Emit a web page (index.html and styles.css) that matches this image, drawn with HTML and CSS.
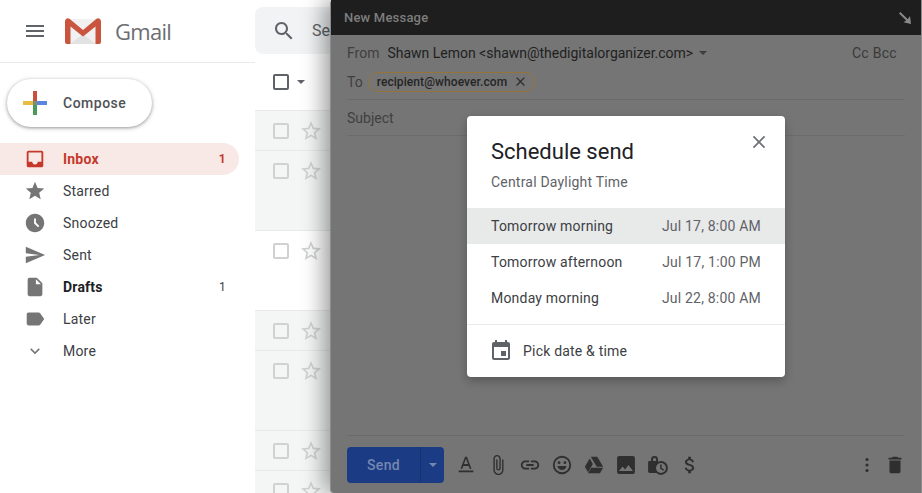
FILE: index.html
```html
<!DOCTYPE html>
<html lang="en">
<head>
<meta charset="utf-8">
<title>Gmail - Schedule send</title>
<link rel="stylesheet" href="styles.css">
</head>
<body>
<svg class="sprite" xmlns="http://www.w3.org/2000/svg">
  <symbol id="star-o" viewBox="0 0 24 24"><path d="M22 9.24l-7.19-.62L12 2 9.19 8.63 2 9.24l5.46 4.73L5.82 21 12 17.27 18.18 21l-1.63-7.03L22 9.24zM12 15.4l-3.76 2.27 1-4.28-3.32-2.88 4.38-.38L12 6.1l1.71 4.04 4.38.38-3.32 2.88 1 4.28L12 15.4z"/></symbol>
  <symbol id="check" viewBox="0 0 24 24"><path fill-rule="evenodd" d="M6 4h12a2 2 0 0 1 2 2v12a2 2 0 0 1-2 2H6a2 2 0 0 1-2-2V6a2 2 0 0 1 2-2zm0 2v12h12V6z"/></symbol>
</svg>
<div class="app">
  <aside class="sidebar">
    <header class="brand">
      <svg class="icon menu" viewBox="0 0 24 24"><path d="M3 18h18v-2H3v2zm0-5h18v-2H3v2zm0-7v2h18V6H3z"/></svg>
      <svg class="logo" viewBox="0 0 36 26">
        <path fill="#f1f1f1" d="M3 1h30v23a2 2 0 0 1-2 2H5a2 2 0 0 1-2-2z"/>
        <path fill="#e2e2e2" d="M5 26L18 16l13 10z"/>
        <path fill="#c9553f" d="M0 3.500C0 .8 2.500-.6 4.500.8L18 12 31.500.8C33.500-.6 36 .8 36 3.500V24a2 2 0 0 1-2 2h-3.500V8.500L18 18.500 5.500 8.500V26H2a2 2 0 0 1-2-2z"/>
      </svg>
      <span class="wordmark">Gmail</span>
    </header>
    <button class="compose" type="button">
      <svg class="plus" viewBox="0 0 24 24">
        <rect x="10" y="0" width="4" height="10" fill="#c9503f"/>
        <rect x="14" y="10" width="10" height="4" fill="#5b86e0"/>
        <rect x="10" y="14" width="4" height="10" fill="#4b9a5a"/>
        <rect x="0" y="10" width="10" height="4" fill="#e9bd42"/>
        <rect x="10" y="10" width="4" height="4" fill="#7f8f6f"/>
      </svg>
      <span>Compose</span>
    </button>
    <nav class="nav">
      <a class="nav-item active"><svg class="icon" viewBox="0 0 24 24"><path fill-rule="evenodd" d="M5 3h14a2 2 0 0 1 2 2v14a2 2 0 0 1-2 2H5a2 2 0 0 1-2-2V5a2 2 0 0 1 2-2zm0 2v10h4c0 1.660 1.350 3 3 3s3-1.340 3-3h4V5z"/></svg><span class="label">Inbox</span><span class="count">1</span></a>
      <a class="nav-item"><svg class="icon" viewBox="0 0 24 24"><path d="M12 17.270L18.180 21l-1.640-7.030L22 9.240l-7.190-.61L12 2 9.190 8.630 2 9.240l5.460 4.730L5.820 21z"/></svg><span class="label">Starred</span></a>
      <a class="nav-item"><svg class="icon" viewBox="0 0 24 24"><path d="M11.990 2C6.470 2 2 6.480 2 12s4.470 10 9.990 10C17.520 22 22 17.520 22 12S17.520 2 11.990 2zm3.300 14.710L11 12.410V7h2v4.590l3.710 3.710-1.420 1.410z"/></svg><span class="label">Snoozed</span></a>
      <a class="nav-item"><svg class="icon" viewBox="0 0 24 24"><path d="M2.010 21L23 12 2.010 3 2 10l15 2-15 2z"/></svg><span class="label">Sent</span></a>
      <a class="nav-item strong"><svg class="icon" viewBox="0 0 24 24"><path d="M14 2H6c-1.100 0-1.990.9-1.990 2L4 20c0 1.100.89 2 1.990 2H18c1.100 0 2-.9 2-2V8zm-1 7V3.500L18.500 9z"/></svg><span class="label">Drafts</span><span class="count">1</span></a>
      <a class="nav-item"><svg class="icon" viewBox="0 0 24 24"><path d="M17.630 5.840C17.270 5.330 16.670 5 16 5L5 5.010C3.900 5.010 3 5.900 3 7v10c0 1.100.9 1.990 2 1.990L16 19c.67 0 1.270-.33 1.630-.84L22 12z"/></svg><span class="label">Later</span></a>
      <a class="nav-item"><svg class="icon chevron" viewBox="0 0 24 24"><path d="M16.590 8.590L12 13.170 7.410 8.590 6 10l6 6 6-6z"/></svg><span class="label">More</span></a>
    </nav>
  </aside>

  <main class="mail">
    <div class="search">
      <svg class="icon search-icon" viewBox="0 0 24 24"><path d="M15.500 14h-.79l-.28-.27C15.410 12.590 16 11.110 16 9.500 16 5.910 13.090 3 9.500 3S3 5.910 3 9.500 5.910 16 9.500 16c1.610 0 3.090-.59 4.230-1.570l.27.28v.79l5 4.990L20.490 19l-4.990-5zm-6 0C7.010 14 5 11.990 5 9.500S7.010 5 9.500 5 14 7.010 14 9.500 11.990 14 9.500 14z"/></svg>
      <span class="search-text">Se</span>
    </div>
    <div class="toolbar">
      <svg class="icon master-check" viewBox="0 0 24 24"><use href="#check"/></svg>
      <span class="caret"></span>
    </div>
    <div class="row read"><svg class="cb" viewBox="0 0 24 24"><use href="#check"/></svg><svg class="st" viewBox="0 0 24 24"><use href="#star-o"/></svg></div>
    <div class="row read tall"><svg class="cb" viewBox="0 0 24 24"><use href="#check"/></svg><svg class="st" viewBox="0 0 24 24"><use href="#star-o"/></svg></div>
    <div class="row tall"><svg class="cb" viewBox="0 0 24 24"><use href="#check"/></svg><svg class="st" viewBox="0 0 24 24"><use href="#star-o"/></svg></div>
    <div class="row read"><svg class="cb" viewBox="0 0 24 24"><use href="#check"/></svg><svg class="st" viewBox="0 0 24 24"><use href="#star-o"/></svg></div>
    <div class="row read tall"><svg class="cb" viewBox="0 0 24 24"><use href="#check"/></svg><svg class="st" viewBox="0 0 24 24"><use href="#star-o"/></svg></div>
    <div class="row read"><svg class="cb" viewBox="0 0 24 24"><use href="#check"/></svg><svg class="st" viewBox="0 0 24 24"><use href="#star-o"/></svg></div>
    <div class="row read"><svg class="cb" viewBox="0 0 24 24"><use href="#check"/></svg><svg class="st" viewBox="0 0 24 24"><use href="#star-o"/></svg></div>
  </main>

  <section class="composer">
    <header class="composer-head">
      <span>New Message</span>
      <svg class="resize" viewBox="0 0 12 12"><path d="M1.400 0L0 1.400 7.200 8.600 4.500 10.200 12 12 11 4 8.800 7.200z"/></svg>
    </header>
    <div class="composer-body">
      <div class="from-row">
        <span class="field">From</span>
        <span class="sender">Shawn Lemon &lt;shawn@thedigitalorganizer.com&gt;</span>
        <span class="caret dark"></span>
        <span class="cc">Cc Bcc</span>
      </div>
      <div class="to-row">
        <span class="field">To</span>
        <span class="chip">recipient@whoever.com
          <svg class="chip-x" viewBox="0 0 24 24"><path d="M19 6.410L17.590 5 12 10.590 6.410 5 5 6.410 10.590 12 5 17.590 6.410 19 12 13.410 17.590 19 19 17.590 13.410 12z"/></svg>
        </span>
      </div>
      <div class="subject-row"><span class="field">Subject</span></div>
      <div class="editor"></div>
      <footer class="composer-foot">
        <div class="send"><span class="send-label">Send</span><span class="send-more"><span class="caret blue"></span></span></div>
        <div class="tools">
          <svg class="tool" viewBox="0 0 24 24"><path fill-rule="evenodd" d="M4 18h16v2H4zM11 3h2l5 13h-2l-1.100-3H9.100L8 16H6zm-1.200 8h4.400L12 5.200z"/></svg>
          <svg class="tool" viewBox="0 0 24 24"><path d="M16.500 6v11.500c0 2.210-1.790 4-4 4s-4-1.790-4-4V5c0-1.380 1.120-2.500 2.500-2.500s2.500 1.120 2.500 2.500v10.500c0 .55-.45 1-1 1s-1-.45-1-1V6H10v9.500c0 1.380 1.120 2.500 2.500 2.500s2.500-1.120 2.500-2.500V5c0-2.210-1.790-4-4-4S7 2.790 7 5v12.500c0 3.040 2.460 5.500 5.500 5.500s5.500-2.460 5.500-5.500V6z"/></svg>
          <svg class="tool" viewBox="0 0 24 24"><path d="M3.900 12c0-1.710 1.390-3.100 3.100-3.100h4V7H7c-2.760 0-5 2.240-5 5s2.240 5 5 5h4v-1.900H7c-1.710 0-3.100-1.390-3.100-3.100zM8 13h8v-2H8zm9-6h-4v1.900h4c1.710 0 3.100 1.390 3.100 3.100s-1.390 3.100-3.100 3.100h-4V17h4c2.760 0 5-2.240 5-5s-2.240-5-5-5z"/></svg>
          <svg class="tool" viewBox="0 0 24 24"><path fill-rule="evenodd" d="M12 2a10 10 0 1 1 0 20 10 10 0 0 1 0-20zm0 2a8 8 0 1 0 0 16 8 8 0 0 0 0-16z"/><circle cx="8.800" cy="9.500" r="1.500"/><circle cx="15.200" cy="9.500" r="1.500"/><path d="M7 13h10c-.6 2.700-2.600 4.500-5 4.500S7.600 15.700 7 13z"/></svg>
          <svg class="tool" viewBox="0 0 24 24"><path d="M8.500 3h7l6.500 11h-7zM7.300 4.800l3.500 6L5.500 20 2 14zM9 15h13l-3.500 6h-13z"/></svg>
          <svg class="tool wide" viewBox="0 0 24 24"><path fill-rule="evenodd" d="M21 19V5c0-1.100-.9-2-2-2H5c-1.100 0-2 .9-2 2v14c0 1.100.9 2 2 2h14c1.100 0 2-.9 2-2zM8.500 13.500l2.500 3.010L14.500 12l4.500 6H5z"/></svg>
          <svg class="tool wide" viewBox="0 0 24 24"><path fill-rule="evenodd" d="M12 8V6.500a3.500 3.500 0 0 0-7 0V8H3.500A1.500 1.500 0 0 0 2 9.500v9A1.500 1.500 0 0 0 3.500 20H12zM7 8V6.500a1.500 1.500 0 0 1 3 0V8z"/><circle cx="15" cy="15" r="7"/><circle class="tool-hole" cx="15" cy="15" r="5"/><path d="M14.200 11.500v4.200l3.200 2 .8-1.200-2.500-1.500v-3.500z"/></svg>
          <svg class="tool" viewBox="0 0 24 24"><path d="M11.800 10.900c-2.270-.59-3-1.200-3-2.150 0-1.090 1.010-1.850 2.700-1.850 1.780 0 2.440.85 2.500 2.100h2.210c-.07-1.720-1.120-3.300-3.210-3.810V3h-3v2.160c-1.940.42-3.500 1.680-3.500 3.610 0 2.310 1.910 3.460 4.700 4.130 2.500.6 3 1.480 3 2.410 0 .69-.49 1.790-2.700 1.790-2.060 0-2.870-.92-2.980-2.100h-2.200c.12 2.190 1.760 3.420 3.680 3.830V21h3v-2.150c1.950-.37 3.500-1.500 3.500-3.550 0-2.840-2.430-3.810-4.700-4.400z"/></svg>
        </div>
        <div class="tools-end">
          <svg class="tool" viewBox="0 0 24 24"><circle cx="12" cy="6" r="1.700"/><circle cx="12" cy="12" r="1.700"/><circle cx="12" cy="18" r="1.700"/></svg>
          <svg class="tool" viewBox="0 0 24 24"><path d="M6 19c0 1.100.9 2 2 2h8c1.100 0 2-.9 2-2V7H6zM19 4h-3.500l-1-1h-5l-1 1H5v2h14z"/></svg>
        </div>
      </footer>
    </div>
  </section>

  <div class="dialog" role="dialog">
    <div class="dialog-head">
      <div>
        <h1 class="dialog-title">Schedule send</h1>
        <p class="dialog-sub">Central Daylight Time</p>
      </div>
      <svg class="icon dialog-close" viewBox="0 0 24 24"><path d="M19 6.410L17.590 5 12 10.590 6.410 5 5 6.410 10.590 12 5 17.590 6.410 19 12 13.410 17.590 19 19 17.590 13.410 12z"/></svg>
    </div>
    <ul class="options">
      <li class="option hover"><span>Tomorrow morning</span><span class="when">Jul 17, 8:00 AM</span></li>
      <li class="option"><span>Tomorrow afternoon</span><span class="when">Jul 17, 1:00 PM</span></li>
      <li class="option"><span>Monday morning</span><span class="when">Jul 22, 8:00 AM</span></li>
    </ul>
    <div class="pick">
      <svg class="icon" viewBox="0 0 24 24"><path d="M17 12h-5v5h5zM16 1v2H8V1H6v2H5c-1.110 0-1.990.9-1.990 2L3 19c0 1.100.89 2 2 2h14c1.100 0 2-.9 2-2V5c0-1.100-.9-2-2-2h-1V1zm3 18H5V8h14z"/></svg>
      <span>Pick date &amp; time</span>
    </div>
  </div>
</div>
</body>
</html>
```
FILE: styles.css
```css
* { box-sizing: border-box; }
html, body { margin: 0; height: 100%; }
body { font-family: Roboto, "Liberation Sans", sans-serif; color: #202124; background: #fff; overflow: hidden; }
.sprite { display: none; }

.app { position: relative; display: flex; width: 922px; height: 493px; overflow: hidden; background: #fff; }

.icon { width: 24px; height: 24px; fill: #5f6368; flex: none; }

/* Sidebar */
.sidebar { width: 255px; flex: none; display: flex; flex-direction: column; }
.brand { height: 63px; display: flex; align-items: center; padding-left: 23px; border-bottom: 1px solid #e9eaea; }
.logo { width: 36px; height: 26px; margin-left: 18px; }
.wordmark { margin-left: 14px; font-family: "Open Sans", sans-serif; font-size: 22px; color: #6b6e72; letter-spacing: -.7px; }
.compose { display: flex; align-items: center; width: 145px; height: 48px; margin: 16px 0 0 7px; padding: 0 0 0 16px; border: 0; border-radius: 24px; background: #fff; box-shadow: 0 1px 3px rgba(60,64,67,.4), 0 1px 4px 1px rgba(60,64,67,.16); font: 500 14px Roboto, sans-serif; letter-spacing: .5px; color: #505356; }
.plus { width: 24px; height: 24px; margin-right: 16px; }
.nav { margin-top: 16px; width: 239px; display: flex; flex-direction: column; }
.nav-item { display: flex; align-items: center; height: 32px; padding: 0 13px 0 23px; border-radius: 0 16px 16px 0; font-size: 14px; letter-spacing: .2px; color: #3c4043; }
.nav-item .icon { transform: scale(.92); fill: #757575; }
.nav-item .chevron { transform: scale(.8); }
.label { margin-left: 16px; flex: 1; }
.count { font-size: 12px; letter-spacing: .3px; }
.nav-item.active { background: #f8e8e6; color: #c5392c; font-weight: 700; }
.nav-item.active .icon { fill: #c5392c; }
.nav-item.strong { color: #202124; font-weight: 700; }
.nav-item.strong .count { font-weight: 400; color: #3c4043; }

/* Mail list */
.mail { flex: 1; min-width: 0; }
.search { display: flex; align-items: center; height: 47px; margin-top: 7px; padding-left: 17px; background: #f1f3f4; border-radius: 8px 0 0 8px; }
.search-text { margin-left: 16px; font-size: 16px; color: #5f6368; white-space: nowrap; }
.toolbar { display: flex; align-items: center; height: 56px; padding-left: 14px; }
.master-check { fill: #5f6368; }
.caret { display: inline-block; width: 0; height: 0; border: 4px solid transparent; border-top: 4.500px solid #5f6368; border-bottom: 0; margin-left: 4px; }
.row { display: flex; align-items: flex-start; height: 40px; padding: 8px 0 0 14px; border-top: 1px solid #e8eaea; background: #fff; }
.row.read { background: #f4f6f6; }
.row.tall { height: 80px; }
.cb { width: 24px; height: 24px; fill: #cfd1d2; flex: none; }
.st { width: 24px; height: 24px; fill: #cfd1d2; flex: none; margin-left: 6px; }

/* Composer window */
.composer { position: absolute; top: 0; right: 0; bottom: 0; width: 592px; display: flex; flex-direction: column; background: #757575; border-left: 1px solid #8c8c8c; border-right: 1px solid #8c8c8c; border-radius: 4px 0 0 4px; box-shadow: -6px 0 22px rgba(0,0,0,.4); }
.composer-head { display: flex; align-items: center; justify-content: space-between; height: 35px; flex: none; padding: 0 10px 0 13px; background: #1e1e1e; color: #7d7d7d; font-size: 13px; font-weight: 500; letter-spacing: .2px; }
.resize { width: 12px; height: 12px; fill: #8a8a8a; }
.composer-body { flex: 1; display: flex; flex-direction: column; padding: 0 16px; min-height: 0; }
.from-row { display: flex; align-items: center; height: 36px; flex: none; font-size: 14px; }
.field { color: #3f3f3f; font-size: 14px; }
.sender { margin-left: 8px; color: #1f1f1f; letter-spacing: -.01px; }
.caret.dark { border-top-color: #3c3c3c; margin-left: 6px; }
.cc { margin-left: auto; padding-right: 8px; color: #3a3a3a; font-size: 14px; letter-spacing: .3px; }
.to-row { display: flex; align-items: center; height: 29px; flex: none; padding-bottom: 7px; border-bottom: 1px solid #6b6b6b; }
.chip { display: flex; align-items: center; height: 20px; margin-left: 5px; padding: 0 6px 0 8px; border: 1px solid #957439; border-radius: 10px; font-size: 12px; font-weight: 500; color: #252525; letter-spacing: .08px; }
.chip-x { width: 15px; height: 15px; margin-left: 6px; fill: #2e2e2e; }
.subject-row { display: flex; align-items: center; height: 36px; flex: none; border-bottom: 1px solid #6b6b6b; }
.editor { flex: 1; }
.composer-foot { display: flex; align-items: center; height: 58px; flex: none; border-top: 1px solid #6b6b6b; padding: 11px 0 10px; }
.send { display: flex; width: 97px; height: 36px; background: #1b3c85; border-radius: 4px; color: #7387b1; font-size: 14px; font-weight: 500; letter-spacing: .3px; }
.send-label { flex: 1; display: flex; align-items: center; justify-content: center; }
.send-more { width: 24px; display: flex; align-items: center; justify-content: center; border-left: 1px solid #17316c; }
.caret.blue { border-top-color: #7387b1; margin-left: 0; }
.tools { display: flex; align-items: center; gap: 10px; margin-left: 11px; }
.tools-end { display: flex; align-items: center; gap: 6px; margin-left: auto; margin-right: -1px; }
.tool { width: 22px; height: 22px; fill: #2f2f2f; flex: none; }
.tool.wide { transform: scale(1.08); }
.tool-hole { fill: #757575; }

/* Schedule dialog */
.dialog { position: absolute; left: 467px; top: 116px; width: 318px; height: 261px; background: #fff; border-radius: 4px; box-shadow: 0 4px 10px rgba(0,0,0,.25); display: flex; flex-direction: column; }
.dialog-head { display: flex; justify-content: space-between; align-items: flex-start; height: 92px; flex: none; padding: 21px 14px 0 24px; }
.dialog-title { margin: 0; font-size: 22px; line-height: 30px; font-weight: 400; color: #202124; letter-spacing: 0; }
.dialog-sub { margin: 5px 0 0; font-size: 14px; line-height: 20px; color: #5f6368; letter-spacing: .2px; }
.dialog-close { margin-top: -7px; transform: scale(.88); fill: #6f7377; }
.options { list-style: none; margin: 0; padding: 0 0 8px; border-bottom: 1px solid #e8eaed; }
.option { display: flex; justify-content: space-between; align-items: center; height: 36px; padding: 0 24px; font-size: 14px; letter-spacing: .2px; color: #3c4043; }
.option.hover { background: #e8e9e9; }
.when { color: #5f6368; }
.pick { flex: 1; display: flex; align-items: center; gap: 10px; padding-left: 22px; font-size: 14px; letter-spacing: .2px; color: #3c4043; }
```
